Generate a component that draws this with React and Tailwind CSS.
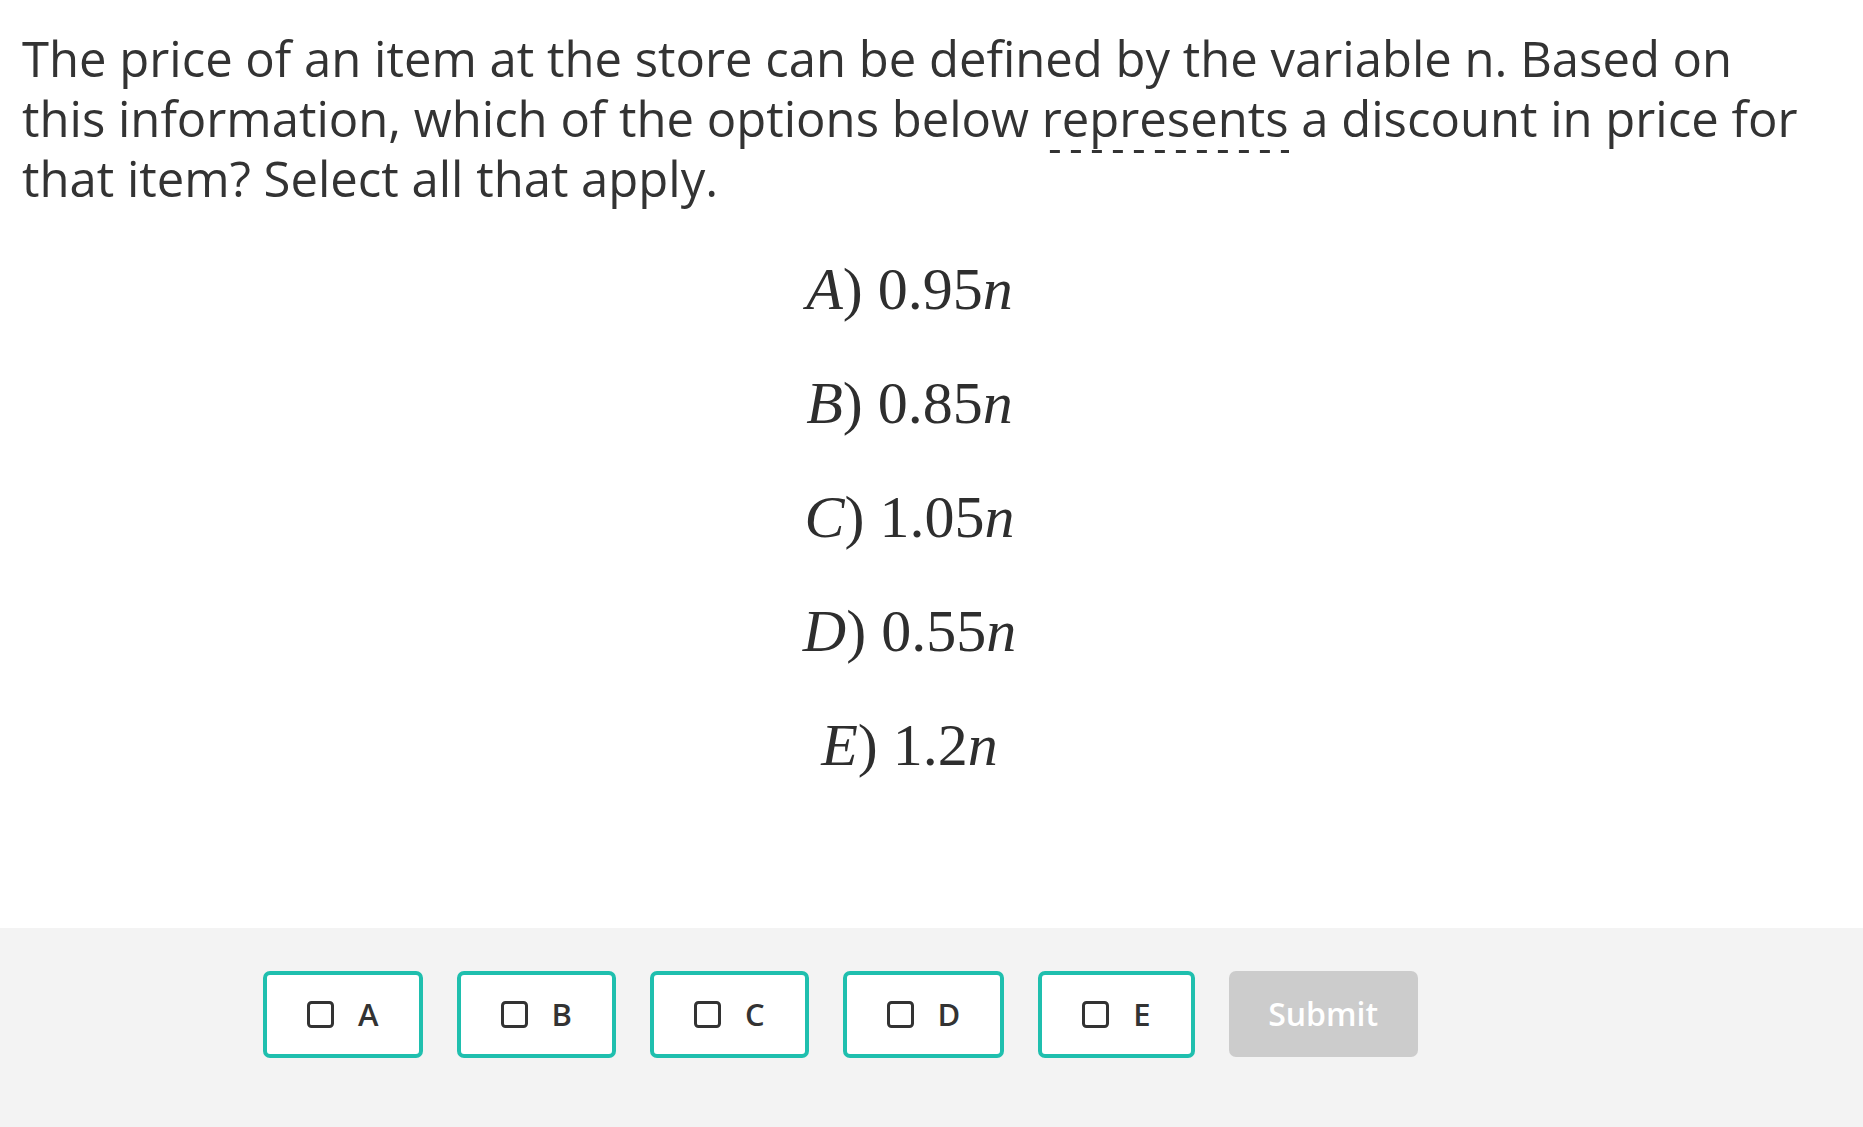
import React from "react";

const options = [
  { letter: "A", value: "0.95" },
  { letter: "B", value: "0.85" },
  { letter: "C", value: "1.05" },
  { letter: "D", value: "0.55" },
  { letter: "E", value: "1.2" },
];

const CheckBox = () => (
  <svg width="27" height="27" viewBox="0 0 27 27" fill="none">
    <rect x="1.5" y="1.5" width="24" height="24" rx="3" stroke="#333" strokeWidth="3" />
  </svg>
);

const App = () => {
  return (
    <div className="flex flex-col min-h-screen bg-white">
      <div className="h-[928px] pl-[22px] pr-[60px] pt-[28px]">
        <p className="font-['Open_Sans',sans-serif] text-[49px] leading-[60px] text-[#333]">
          The price of an item at the store can be defined by the variable n. Based on this
          information, which of the options below{" "}
          <span className="pb-[2px] bg-[linear-gradient(to_right,#333_50%,transparent_50%)] bg-[length:21px_3px] bg-repeat-x bg-bottom">
            represents
          </span>{" "}
          a discount in price for that item? Select all that apply.
        </p>

        <div className="mt-[24px] pr-[6px] flex flex-col items-center font-['Liberation_Serif',serif] text-[60px] leading-[114px] text-[#2e2e2e]">
          {options.map((o) => (
            <div key={o.letter} className="whitespace-nowrap">
              <i>{o.letter}</i>)<span className="ml-[15px]">{o.value}</span>
              <i>n</i>
            </div>
          ))}
        </div>
      </div>

      <div className="flex-1 bg-[#f3f3f3] pt-[43px] pl-[263px]">
        <div className="flex gap-[34px] font-['Open_Sans',sans-serif]">
          {options.map((o) => (
            <button
              key={o.letter}
              className="h-[87px] px-[40px] flex items-center gap-[24px] bg-white border-[4px] border-[#1fbfae] rounded-[7px] text-[31px] font-semibold text-[#333]"
            >
              <CheckBox />
              <span>{o.letter}</span>
            </button>
          ))}
          <button className="h-[86px] w-[189px] bg-[#cccccc] rounded-[7px] text-[32px] font-semibold text-white">
            Submit
          </button>
        </div>
      </div>
    </div>
  );
};

export default App;
